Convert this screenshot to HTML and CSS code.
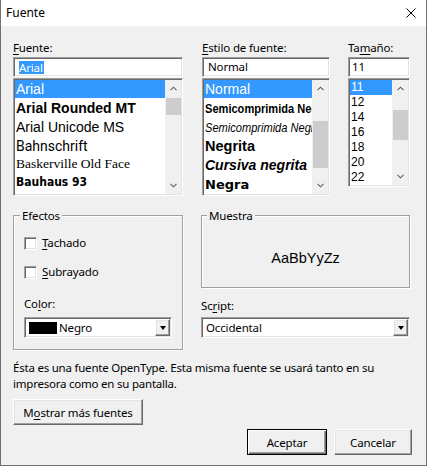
FILE: index.html
```html
<!DOCTYPE html>
<html lang="es">
<head>
<meta charset="utf-8">
<title>Fuente</title>
<link rel="stylesheet" href="styles.css">
</head>
<body>
<div class="window">
  <div class="titlebar">
    <span class="title">Fuente</span>
    <svg class="close" width="10" height="10" viewBox="0 0 10 10"><path d="M0.5 0.5L9.5 9.5M9.5 0.5L0.5 9.5" stroke="#000" stroke-width="1" fill="none"/></svg>
  </div>
  <div class="content">
    <div class="top-row">
      <div class="col col-font">
        <div class="lbl"><u>F</u>uente:</div>
        <div class="field"><span class="sel-text">Arial</span></div>
        <div class="list list-font">
          <div class="items">
            <div class="item selected fi-arial r18">Arial</div>
            <div class="item fi-rounded r19">Arial Rounded MT</div>
            <div class="item fi-unicode r20">Arial Unicode MS</div>
            <div class="item fi-bahn r18">Bahnschrift</div>
            <div class="item fi-bask r18">Baskerville Old Face</div>
            <div class="item fi-bauhaus r18">Bauhaus 93</div>
          </div>
          <div class="sb">
            <div class="sb-btn"><svg width="7" height="5" viewBox="0 0 7 5"><path d="M0.5 4.2L3.5 1.2L6.5 4.2" stroke="#606060" stroke-width="1.1" fill="none"/></svg></div>
            <div class="sb-track"><div class="thumb thumb-font"></div></div>
            <div class="sb-btn"><svg width="7" height="5" viewBox="0 0 7 5"><path d="M0.5 0.8L3.5 3.8L6.5 0.8" stroke="#606060" stroke-width="1.1" fill="none"/></svg></div>
          </div>
        </div>
      </div>
      <div class="col col-style">
        <div class="lbl"><u>E</u>stilo de fuente:</div>
        <div class="field"><span class="field-text">Normal</span></div>
        <div class="list list-style">
          <div class="items">
            <div class="item selected st-normal r18">Normal</div>
            <div class="item r19"><span class="narrow st-semibold">Semicomprimida Negrita</span></div>
            <div class="item r19"><span class="narrow st-semiitalic">Semicomprimida Negrita</span></div>
            <div class="item st-bold r19">Negrita</div>
            <div class="item st-bolditalic r19">Cursiva negrita</div>
            <div class="item st-black r19">Negra</div>
          </div>
          <div class="sb">
            <div class="sb-btn"><svg width="7" height="5" viewBox="0 0 7 5"><path d="M0.5 4.2L3.5 1.2L6.5 4.2" stroke="#606060" stroke-width="1.1" fill="none"/></svg></div>
            <div class="sb-track"><div class="thumb thumb-style"></div></div>
            <div class="sb-btn"><svg width="7" height="5" viewBox="0 0 7 5"><path d="M0.5 0.8L3.5 3.8L6.5 0.8" stroke="#606060" stroke-width="1.1" fill="none"/></svg></div>
          </div>
        </div>
      </div>
      <div class="col col-size">
        <div class="lbl">Ta<u>m</u>año:</div>
        <div class="field field-size"><span class="field-text">11</span></div>
        <div class="list list-size">
          <div class="items">
            <div class="item selected sz">11</div>
            <div class="item sz">12</div>
            <div class="item sz">14</div>
            <div class="item sz">16</div>
            <div class="item sz">18</div>
            <div class="item sz">20</div>
            <div class="item sz">22</div>
          </div>
          <div class="sb">
            <div class="sb-btn"><svg width="7" height="5" viewBox="0 0 7 5"><path d="M0.5 4.2L3.5 1.2L6.5 4.2" stroke="#606060" stroke-width="1.1" fill="none"/></svg></div>
            <div class="sb-track"><div class="thumb thumb-size"></div></div>
            <div class="sb-btn"><svg width="7" height="5" viewBox="0 0 7 5"><path d="M0.5 0.8L3.5 3.8L6.5 0.8" stroke="#606060" stroke-width="1.1" fill="none"/></svg></div>
          </div>
        </div>
      </div>
    </div>

    <div class="mid-row">
      <fieldset class="group effects">
        <legend class="legend">Efectos</legend>
        <div class="check-row first"><span class="checkbox"></span><span><u>T</u>achado</span></div>
        <div class="check-row second"><span class="checkbox"></span><span><u>S</u>ubrayado</span></div>
        <div class="lbl color-lbl">Co<u>l</u>or:</div>
        <div class="combo combo-color">
          <span class="swatch"></span><span class="combo-text">Negro</span>
          <span class="combo-btn"><span class="tri"></span></span>
        </div>
      </fieldset>
      <div class="right-col">
        <fieldset class="group sample">
          <legend class="legend legend-sample">Muestra</legend>
          <div class="sample-text">AaBbYyZz</div>
        </fieldset>
        <div class="lbl script-lbl">Sc<u>r</u>ipt:</div>
        <div class="combo combo-script">
          <span class="combo-text script-text">Occidental</span>
          <span class="combo-btn"><span class="tri"></span></span>
        </div>
      </div>
    </div>

    <p class="info">Ésta es una fuente OpenType. Esta misma fuente se usará tanto en su<br>impresora como en su pantalla.</p>

    <div class="more-row"><button class="btn btn-more">M<u>o</u>strar más fuentes</button></div>
    <div class="actions">
      <button class="btn btn-default btn-ok">Aceptar</button>
      <button class="btn btn-cancel">Cancelar</button>
    </div>
  </div>
</div>
</body>
</html>
```

FILE: styles.css
```css
* { box-sizing: border-box; }
html, body { margin: 0; padding: 0; background: #f0f0f0; }
body {
  font-family: "Noto Sans", sans-serif;
  font-size: 11.5px;
  letter-spacing: -0.15px;
  color: #000;
}
u { text-decoration: underline; text-underline-offset: 2px; }

.window {
  width: 427px;
  height: 466px;
  background: #f0f0f0;
  border: 1px solid #707070;
  border-top: none;
  display: flex;
  flex-direction: column;
}

.titlebar {
  height: 26px;
  flex-shrink: 0;
  background: #fff;
  display: flex;
  align-items: center;
  justify-content: space-between;
  padding: 0 10px 0 5px;
}
.title { line-height: 16px; font-size: 12px; letter-spacing: 0; }
.close { display: block; }

.content { padding: 14px 16px 0 12px; }

/* 3D helpers */
.field, .list, .combo, .checkbox {
  background: #fff;
  border: 1px solid;
  border-color: #a0a0a0 #fff #fff #a0a0a0;
  box-shadow: inset 1px 1px 0 #696969, inset -1px -1px 0 #e3e3e3;
}

.top-row { display: flex; }
.col-font { width: 170px; margin-right: 19px; }
.col-style { width: 128px; margin-right: 18px; }
.col-size { width: 62px; }

.lbl { height: 16px; line-height: 16px; margin-bottom: 1px; white-space: nowrap; }

.field {
  height: 20px;
  display: flex;
  align-items: center;
  padding: 1px 5px;
}
.sel-text {
  display: inline-block;
  background: #3399ff;
  color: #fff;
  line-height: 13px;
  padding: 0 1px 0 0;
}
.field-text { line-height: 14px; }
.field-size { padding-left: 3px; }

.list {
  margin-top: 1px;
  display: flex;
  padding: 1px;
}
.list-font, .list-style { height: 118px; }
.list-size { height: 109px; }

.items { flex: 1; min-width: 0; overflow: hidden; }
.item {
  display: flex;
  align-items: center;
  white-space: nowrap;
  overflow: hidden;
  padding-left: 1px;
  letter-spacing: 0;
}
.item.selected { background: #3399ff; color: #fff; }
.r18 { height: 18px; }
.r19 { height: 19px; }
.r20 { height: 20px; }

.sb {
  width: 16px;
  flex-shrink: 0;
  display: flex;
  flex-direction: column;
  background: #f0f0f0;
}
.sb-btn {
  height: 17px;
  flex-shrink: 0;
  display: flex;
  align-items: center;
  justify-content: center;
}
.sb-btn svg { display: block; }
.sb-track { flex: 1; }
.thumb { background: #cdcdcd; margin-left: 1px; }
.thumb-font { height: 17px; margin-top: 1px; }
.thumb-style { height: 47px; margin-top: 24px; }
.thumb-size { height: 30px; margin-top: 13px; }

/* font list faces */
.fi-arial, .fi-unicode { font-family: "Liberation Sans", Arial, sans-serif; font-size: 14px; }
.fi-rounded { font-family: "Liberation Sans", Arial, sans-serif; font-size: 14px; font-weight: bold; }
.fi-bahn { font-family: Roboto, "Liberation Sans", sans-serif; font-size: 14px; }
.fi-bask { font-family: "Liberation Serif", serif; font-size: 13.5px; }
.fi-bauhaus { font-family: "DejaVu Sans Condensed", "DejaVu Sans", sans-serif; font-stretch: condensed; font-weight: bold; font-size: 12px; }

/* style list faces */
.st-normal { font-family: "Liberation Sans", Arial, sans-serif; font-size: 14px; }
.narrow {
  display: inline-block;
  font-family: "Liberation Sans", Arial, sans-serif;
  font-size: 13.5px;
  transform: scaleX(0.82);
  transform-origin: left center;
  padding-top: 2px;
}
.st-semibold { font-weight: bold; }
.st-semiitalic { font-style: italic; }
.st-bold { font-family: "Liberation Sans", Arial, sans-serif; font-size: 14.5px; font-weight: bold; }
.st-bolditalic { font-family: "Liberation Sans", Arial, sans-serif; font-size: 14px; font-weight: bold; font-style: italic; }
.st-black { font-family: "DejaVu Sans", sans-serif; font-size: 13px; font-weight: bold; padding-top: 2px; }

.sz { height: 15px; font-family: "Liberation Sans", Arial, sans-serif; font-size: 12px; line-height: 15px; }

/* middle */
.mid-row {
  display: grid;
  grid-template-columns: 170px 1fr;
  column-gap: 18px;
  align-items: start;
  margin-top: 12px;
}
.group {
  margin: 0;
  min-width: 0;
  border: 1px solid #a0a0a0;
  box-shadow: inset 1px 1px 0 #fff, 1px 1px 0 #fff;
}
.legend {
  padding: 0 2px;
  margin-left: -4px;
  line-height: 15px;
  height: 15px;
  background: #f0f0f0;
}
.effects { padding: 0 10px 11px 10px; }
.check-row {
  height: 16px;
  line-height: 16px;
  display: flex;
  align-items: center;
}
.check-row.first { margin-top: 12px; }
.check-row.second { margin-top: 13px; }
.checkbox {
  width: 13px;
  height: 13px;
  margin-right: 5px;
  flex-shrink: 0;
}
.color-lbl { margin-top: 16px; margin-bottom: 5px; }

.combo {
  height: 21px;
  display: flex;
  align-items: center;
  padding: 1px;
}
.swatch {
  width: 28px;
  height: 12px;
  background: #000;
  margin-left: 3px;
  margin-right: 2px;
}
.combo-text { line-height: 15px; }
.script-text { margin-left: 3px; }
.combo-btn {
  margin-left: auto;
  width: 15px;
  height: 17px;
  background: #f0f0f0;
  border: 1px solid;
  border-color: #fff #696969 #696969 #fff;
  box-shadow: inset -1px -1px 0 #a0a0a0, inset 1px 1px 0 #e3e3e3;
  display: flex;
  align-items: center;
  justify-content: center;
}
.tri {
  width: 0;
  height: 0;
  border-left: 3.5px solid transparent;
  border-right: 3.5px solid transparent;
  border-top: 4px solid #000;
}

.right-col { display: flex; flex-direction: column; }
.sample { padding: 0; }
.legend-sample { margin-left: 5px; }
.sample-text {
  height: 64px;
  display: flex;
  align-items: center;
  justify-content: center;
  padding-top: 6px;
  font-family: "Liberation Sans", Arial, sans-serif;
  font-size: 14.5px;
  letter-spacing: 0;
}
.script-lbl { margin-top: 10px; margin-bottom: 3px; }

.info { margin: 10px 0 0 0; line-height: 16px; white-space: nowrap; letter-spacing: -0.22px; }

.btn {
  font-family: inherit;
  font-size: 11.5px;
  letter-spacing: -0.15px;
  color: #000;
  height: 26px;
  padding: 0;
  background: #f0f0f0;
  border: 1px solid;
  border-color: #fff #696969 #696969 #fff;
  box-shadow: inset -1px -1px 0 #a0a0a0, inset 1px 1px 0 #e3e3e3;
}
.btn-default {
  border: 1px solid #000;
  box-shadow: inset 1px 1px 0 #fff, inset -1px -1px 0 #696969, inset -2px -2px 0 #a0a0a0;
}
.more-row { margin-top: 7px; display: flex; }
.btn-more { width: 130px; }
.actions {
  margin-top: 4px;
  margin-right: -2px;
  display: flex;
  justify-content: flex-end;
  gap: 7px;
}
.btn-ok { width: 80px; }
.btn-cancel { width: 78px; }
```
